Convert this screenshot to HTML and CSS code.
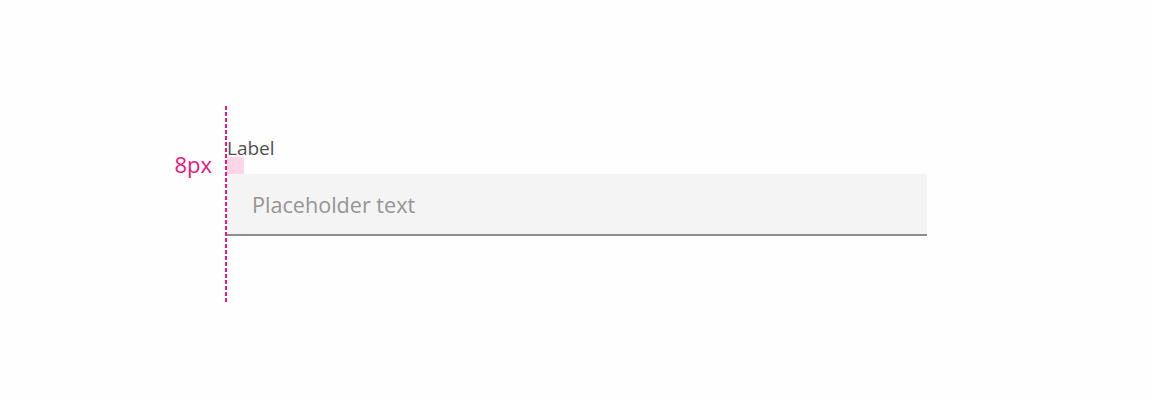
FILE: index.html
```
<!DOCTYPE html>
<html lang="en">
<head>
    <meta charset="UTF-8">
    <meta name="viewport" content="width=device-width, initial-scale=1.0">
    <title>Text input - label spacing</title>
    <link rel="stylesheet" href="styles.css">
</head>
<body>
    <div class="canvas">
        <div class="note">8px</div>
        <div class="guide"></div>
        <div class="field">
            <label class="label" for="text-input">Label</label>
            <div class="gap"></div>
            <input type="text" id="text-input" class="input" placeholder="Placeholder text">
        </div>
    </div>
</body>
</html>
```

FILE: styles.css
```
* {
    margin: 0;
    padding: 0;
    box-sizing: border-box;
}

body {
    font-family: "Open Sans", "Noto Sans", sans-serif;
    background: #fefefe;
    width: 1152px;
    height: 401px;
    overflow: hidden;
}

.canvas {
    display: flex;
    align-items: flex-start;
    padding-top: 106px;
}

.note {
    width: 225px;
    padding-right: 13px;
    margin-top: 44px;
    text-align: right;
    font-size: 22px;
    line-height: 28px;
    color: #e8177f;
}

.guide {
    width: 2px;
    height: 197px;
    background: repeating-linear-gradient(to bottom, #ee1a84 0, #ee1a84 4px, transparent 4px, transparent 6px);
}

.field {
    display: flex;
    flex-direction: column;
    width: 700px;
    margin-top: 32px;
}

.label {
    display: block;
    height: 19px;
    font-size: 19px;
    line-height: 20px;
    color: #525252;
}

.gap {
    width: 17px;
    height: 17px;
    background: #ffd6e8;
}

.input {
    height: 62px;
    padding: 0 25px;
    border: none;
    border-bottom: 2px solid #8d8d8d;
    background: #f4f4f4;
    font-family: inherit;
    font-size: 21.6px;
    color: #161616;
    outline: none;
}

.input::placeholder {
    color: #959595;
}
```
